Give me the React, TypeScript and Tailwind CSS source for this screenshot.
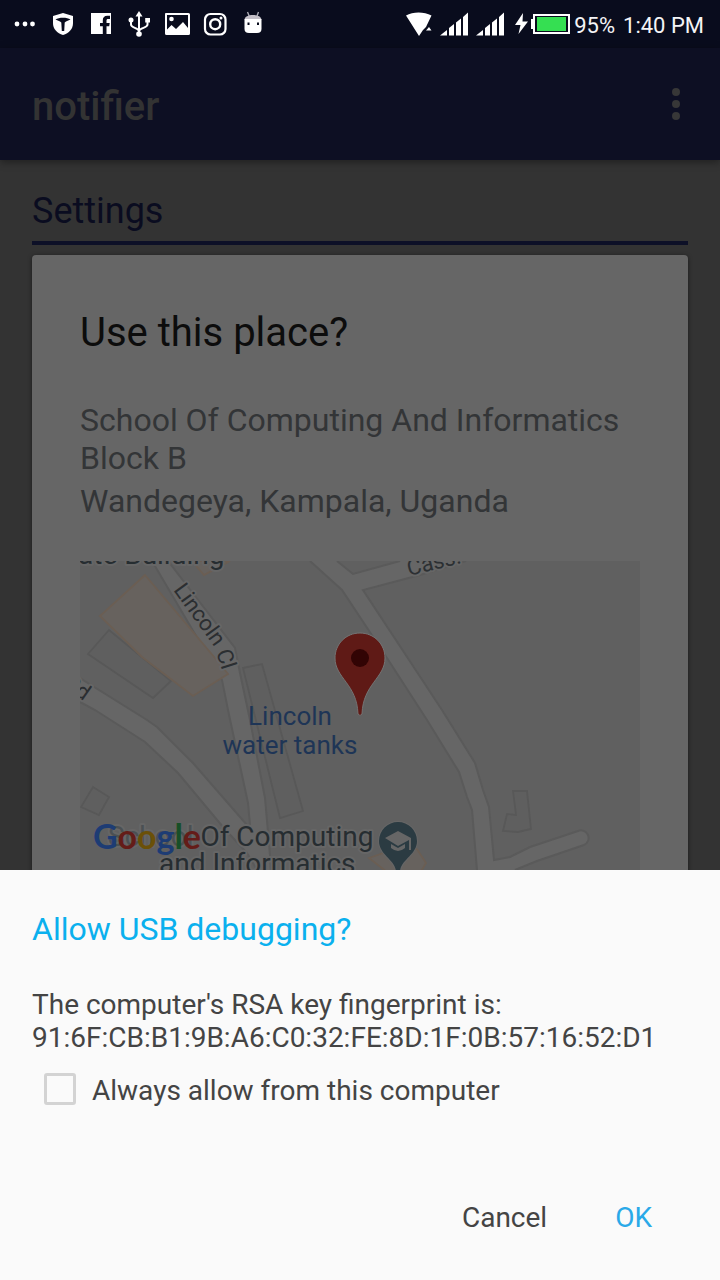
import type { ReactNode } from "react";

function StatusIcon({ children }: { children: ReactNode }) {
  return (
    <svg className="h-[38px] w-[38px]" viewBox="0 0 38 38" fill="#fff" aria-hidden="true">
      {children}
    </svg>
  );
}

function Signal() {
  return (
    <svg className="h-6 w-7" viewBox="0 0 28 24" fill="#fff" aria-hidden="true">
      <path d="M0 23.500 7 18V23.500ZM9 16 14 12V23.500H9ZM16 10.500 21 6.500V23.500H16ZM23 5 28 .5V23.500H23Z" />
    </svg>
  );
}

function StatusBar() {
  return (
    <div className="flex h-12 shrink-0 items-center justify-between bg-[#090c1d] pl-1.5 pr-4 text-[22px] leading-6 text-[#f4f4f6]">
      <div className="flex">
        <StatusIcon>
          <circle cx="11" cy="19" r="2.400" />
          <circle cx="19" cy="19" r="2.400" />
          <circle cx="26.500" cy="19" r="2.400" />
        </StatusIcon>
        <StatusIcon>
          <path d="M19 8 29 11V18C29 24 25 28 19 30C13 28 9 24 9 18V11Z" />
          <path d="M11.500 14.500C15 12.200 23 12.200 26.500 14.500L22 16.500 20.700 17.500 20.200 26H17.800L17.300 17.500 16 16.500Z" fill="#090c1d" />
        </StatusIcon>
        <StatusIcon>
          <path d="M9 8H29V29H24.500V21.300H27.200L27.700 18H24.500V15.500C24.500 14.500 25 14 26 14H28V10.800H25.200C22.500 10.800 20.800 12.500 20.800 15.200V18H18V21.300H20.800V29H9Z" />
        </StatusIcon>
        <StatusIcon>
          <path d="M19 6 22.500 11.500H15.500Z" />
          <path d="M19 10V29M11 15V19.500C11 23 18 22.500 19 26M27.500 15V19.500C27.500 23 20 22.500 19 26" fill="none" stroke="#fff" strokeWidth="2" />
          <circle cx="11" cy="15" r="2.500" />
          <path d="M25.200 13H30V17.500H25.200Z" />
          <circle cx="19" cy="29" r="2.800" />
        </StatusIcon>
        <StatusIcon>
          <path fillRule="evenodd" d="M7.500 8H30.500Q32 8 32 9.500V28.500Q32 30 30.500 30H8.500Q7 30 7 28.500V9.500Q7 8 7.500 8ZM9 10V24.500L13.500 20 18 24 25 17 30 23V10Z" />
          <circle cx="13.500" cy="14" r="2.300" />
        </StatusIcon>
        <StatusIcon>
          <rect x="9" y="9" width="20.500" height="20.500" rx="5.500" fill="none" stroke="#fff" strokeWidth="2.200" />
          <circle cx="19.200" cy="19.200" r="5" fill="none" stroke="#fff" strokeWidth="2.400" />
          <circle cx="25" cy="13" r="1.500" />
        </StatusIcon>
        <StatusIcon>
          <path d="M13.500 7 15.200 11M24.500 7 23 11" stroke="#aaaab3" strokeWidth="1.400" />
          <path d="M10.500 14.500C11 11.500 14 10 19 10S27 11.500 27.500 14.500Z" fill="#c4c0c8" />
          <path d="M10.500 14H27.500V24Q27.500 28 23 28H15Q10.500 28 10.500 24Z" />
          <path d="M13.500 17.500H15.500V20H13.500ZM23 17.500H25V20H23Z" fill="#090c1d" />
        </StatusIcon>
      </div>
      <div className="flex items-center">
        <svg className="mr-2 h-6 w-[26px]" viewBox="0 0 26 24" fill="#fff" aria-hidden="true">
          <path d="M0 3.500C7-.5 18-.5 25.500 3.500L20 15 17 18 13 24Z" />
          <path d="M18 19 22 13.500 26 19Z" fill="#090c1d" />
          <path d="M20 18.500 23 15 25.500 18.500Z" />
        </svg>
        <Signal />
        <span className="w-2" />
        <Signal />
        <svg className="ml-2 mr-1 h-6 w-[58px]" viewBox="0 0 58 24" fill="#fff" aria-hidden="true">
          <path d="M11 1 3 13H8.500L6.500 22 16 9.500H10.500Z" />
          <path d="M19 7H21V17H19Z" />
          <rect x="22" y="3" width="35" height="18" fill="none" stroke="#fff" strokeWidth="2" />
          <rect x="25" y="5" width="29" height="14" fill="#35df52" />
        </svg>
        <span className="mr-2 pt-1">95%</span>
        <span className="pt-1">1:40 PM</span>
      </div>
    </div>
  );
}

function PlaceMap() {
  return (
    <svg
      className="mt-10 block w-full bg-[#606060]"
      viewBox="80 561 560 400"
      role="img"
      aria-label="Map"
      fontFamily="Roboto, sans-serif"
    >
      <g fill="#5f5f5f" stroke="#585858" strokeWidth="1.800">
        <path d="M109 630 88 654 153 698 171 681Z" />
        <path d="M243 668 262 664 303 811 280 818Z" />
        <path d="M93 787 109 797 99 815 81 807Z" />
        <path d="M513 791H527L531 829 518 832 503 831 507 814 516 815Z" />
      </g>
      <g fill="#666">
        <path d="M152 561H168L235 648 240 673 250 720 265 798 270 855 275 961H190L257 870 247 853 250 825 248 803 228 710 222 680Z" />
        <path d="M80 678 147 720 157 727 193 763 247 825 270 855 265 880 247 853 223 827 178 773 145 742 95 710 80 702Z" />
        <path d="M310 561H337L353 574 400 561H466L420 575 363 590 442 710 475 763 483 790 489 807 494 860 510 857 530 847 578 831A7 7 0 0 1 584 845L537 861 515 870 494 885V961H482L477 870 472 810 467 797 459 772 427 720 387 658 342 590Z" />
      </g>
      <g fill="none" stroke="#5a5a5a" strokeWidth="2">
        <path d="M152 561 222 680 228 710 248 803 250 825" />
        <path d="M168 561 235 648 240 673 250 720 265 798 270 855 275 961" />
        <path d="M80 678 147 720 157 727 193 763 247 825" />
        <path d="M80 702 95 710 145 742 178 773 223 827 247 853 257 870" />
        <path d="M310 561 342 590 387 658 427 720 459 772 467 797 472 810 477 870 482 961" />
        <path d="M337 561 353 574 400 561M466 561 420 575 363 590 442 710 475 763 483 790 489 807 494 860 510 857 530 847 578 831A7 7 0 0 1 584 845L537 861 515 870" />
      </g>
      <g fill="#67625e" stroke="#6b5e53" strokeWidth="1.800">
        <path d="M145 575 100 616 142 657 193 696 228 674 215 658Z" />
        <path d="M192 561 204 575 230 561Z" />
        <path d="M369 858 398 848 417 849 426 863 410 890Z" />
      </g>
      <g fill="#262d31" stroke="#666" strokeWidth="4" paintOrder="stroke" strokeLinejoin="round">
        <text x="78" y="564" fontSize="28">ate Building</text>
        <text fontSize="22" fill="#2c3033" transform="translate(409 576) rotate(-14)">Cass.</text>
        <text fontSize="22" fill="#2b2e31" transform="translate(173 590) rotate(54)">Lincoln</text>
        <text fontSize="22" fill="#2b2e31" transform="translate(216 652) rotate(72)">Cl</text>
        <text fontSize="22" fill="#2b2e31" textAnchor="end" transform="translate(84 701) rotate(35)">Rd</text>
        <text x="108" y="846" fontSize="28"><tspan fill="#4b5053">School</tspan> Of Computing</text>
        <text x="159" y="873" fontSize="28">and Informatics</text>
      </g>
      <g fill="#1e3556" fontSize="26" textAnchor="middle">
        <text x="290" y="725">Lincoln</text>
        <text x="290" y="754">water tanks</text>
      </g>
      <path d="M360 633C346 633 335 644 335 658C335 678 357 684 358 714Q360 717 362 714C363 684 385 678 385 658C385 644 374 633 360 633Z" fill="#5f1a16" stroke="#747474" strokeWidth="1" />
      <circle cx="360" cy="658" r="9" fill="#320404" />
      <path d="M398 822A19 19 0 0 0 379 841C379 855 396 860 396 872H400C400 860 417 855 417 841A19 19 0 0 0 398 822Z" fill="#2b3b42" stroke="#666" strokeWidth="2" paintOrder="stroke" />
      <path d="M398 831 411 838V850H409V840L398 846 385 838ZM391 844 398 848 405 844V848Q398 854 391 848Z" fill="#666" />
      <text x="93" y="849" fontSize="34" fontWeight="700" fontFamily="Lato, sans-serif" fill="#1d3c74">
        G<tspan fill="#641c18">o</tspan><tspan fill="#6b5008">o</tspan><tspan>g</tspan><tspan fill="#174f27">l</tspan><tspan fill="#641c18">e</tspan>
      </text>
    </svg>
  );
}

export default function App() {
  return (
    <div className="flex h-screen flex-col overflow-hidden bg-[#333] font-['Roboto',sans-serif]">
      <StatusBar />
      <header className="z-10 flex h-28 shrink-0 items-center justify-between bg-[#0d0f23] px-8 shadow-[0_2px_8px_rgba(0,0,0,0.4)]">
        <h1 className="pt-1.5 text-[40px] font-medium leading-[48px] text-[#333]">notifier</h1>
        <button type="button" aria-label="More options" className="flex flex-col gap-1 p-2">
          <span className="h-2 w-2 rounded-full bg-[#373737]" />
          <span className="h-2 w-2 rounded-full bg-[#373737]" />
          <span className="h-2 w-2 rounded-full bg-[#373737]" />
        </button>
      </header>

      <main className="min-h-0 flex-1 overflow-hidden px-8 pt-7">
        <h2 className="border-b-4 border-[#0d1027] pb-1.5 text-[36px] leading-[47px] text-[#0a0c20]">Settings</h2>
        <section className="mt-2.5 rounded bg-[#666] px-12 pt-[54px] shadow-[0_1px_4px_rgba(0,0,0,0.5)]">
          <h3 className="text-[40px] leading-[48px] text-[#0c0c0c]">Use this place?</h3>
          <p className="mt-11 text-[32px] leading-[38px] text-[#333537]">School Of Computing And Informatics Block B</p>
          <p className="mt-1 text-[32px] leading-[40px] text-[#333537]">Wandegeya, Kampala, Uganda</p>
          <PlaceMap />
        </section>
      </main>

      <div
        role="dialog"
        aria-labelledby="dialog-title"
        className="z-20 shrink-0 bg-[#fafafa] px-8 pb-[38px] pt-10 text-[28px] leading-[33px] text-[#444]"
      >
        <h2 id="dialog-title" className="text-[32px] leading-[38px] text-[#0ab0ee]">Allow USB debugging?</h2>
        <p className="mt-10 break-words">
          The computer's RSA key fingerprint is:
          <br />
          91:6F:CB:B1:9B:A6:C0:32:FE:8D:1F:0B:57:16:52:D1
        </p>
        <label className="mt-4 flex items-center gap-4 pl-3">
          <input
            type="checkbox"
            className="h-8 w-8 appearance-none rounded-[3px] border-[3px] border-[#d3d3d3] bg-[#fafafa] checked:bg-[#0ab0ee]"
          />
          <span className="pt-1">Always allow from this computer</span>
        </label>
        <div className="mt-[86px] flex justify-end gap-9 pr-5">
          <button type="button" className="px-4 py-2">Cancel</button>
          <button type="button" className="px-4 py-2 text-[#2aa9e8]">OK</button>
        </div>
      </div>
    </div>
  );
}
